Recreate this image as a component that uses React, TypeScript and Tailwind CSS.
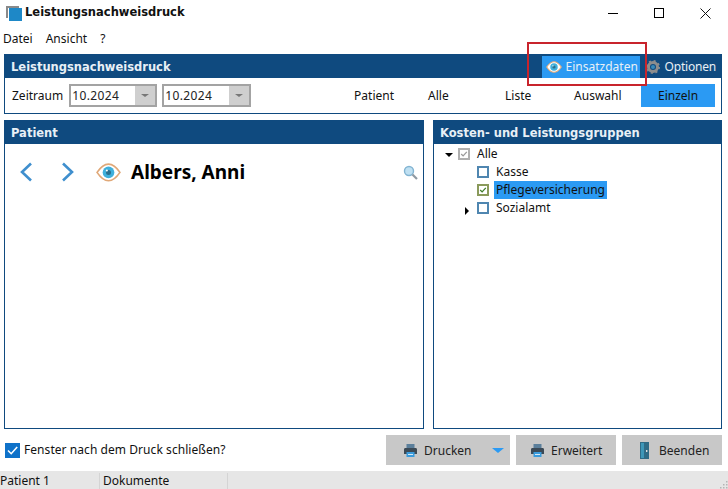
import React from "react";

const font = { fontFamily: '"Noto Sans", sans-serif' };
const boldFont = { fontFamily: '"DejaVu Sans", sans-serif' };

const Eye = ({ size = 24 }: { size?: number }) => (
  <svg width={size} height={size * 0.75} viewBox="0 0 24 18">
    <path d="M1 9C5 3 9 1 12 1s7 2 11 8c-4 6-8 8-11 8s-7-2-11-8z" fill="#fff" stroke="#e0a878" strokeWidth="1.6" />
    <circle cx="12" cy="9" r="5.6" fill="#3fb0dc" />
    <circle cx="12" cy="9" r="2.4" fill="#2a6f8e" />
    <circle cx="10.4" cy="7.2" r="1" fill="#fff" />
  </svg>
);

const Printer = () => (
  <svg width="15" height="15" viewBox="0 0 15 15">
    <rect x="3.5" y="1" width="8" height="4" fill="#5b7f9b" />
    <path d="M1 6.5C1 5.5 1.6 5 2.5 5h10c.9 0 1.5.5 1.5 1.5V11H1z" fill="#3c4a56" />
    <rect x="3.5" y="9" width="8" height="5" fill="#3a9bdc" />
    <rect x="5" y="11" width="5" height="1" fill="#d5e9f6" />
  </svg>
);

const Check = ({ color }: { color: string }) => (
  <svg width="10" height="10" viewBox="0 0 10 10">
    <path d="M1.5 5l2.4 2.4L8.5 2.4" fill="none" stroke={color} strokeWidth="1.6" />
  </svg>
);

const ComboBox = ({ value, className }: { value: string; className: string }) => (
  <div className={`flex h-[23px] items-center border-2 border-[#a3a3a3] bg-white pl-[1px] text-[12px] tracking-[0.4px] text-[#222] ${className}`}>
    <span className="flex-1">{value}</span>
    <div className="flex h-full w-[20px] items-center justify-center bg-[#cfcfcf]">
      <div className="h-0 w-0 border-x-[4px] border-t-[3px] border-x-transparent border-t-[#777]" />
    </div>
  </div>
);

const Panel = ({ title, className, children }: { title: string; className: string; children?: React.ReactNode }) => (
  <section className={`flex flex-col border border-[#0f4a7f] bg-white ${className}`}>
    <h2 className="flex h-[23px] shrink-0 items-center bg-[#0f4a7f] px-[6px] pt-[3px] text-[11.5px] font-bold text-[#e8f0f6]" style={boldFont}>
      {title}
    </h2>
    {children}
  </section>
);

const TreeRow = ({ label, checked, selected, arrow }: { label: string; checked?: boolean; selected?: boolean; arrow?: boolean }) => (
  <div className="relative flex h-[18px] items-center pl-[43px]">
    {arrow && <div className="absolute left-[31px] top-[8px] h-0 w-0 border-y-[4px] border-l-[4px] border-y-transparent border-l-black" />}
    <div className={`flex h-[12px] w-[12px] items-center justify-center border-2 ${checked ? "border-[#8a9a5b]" : "border-[#4f86b0]"}`}>
      {checked && <Check color="#3f7d2a" />}
    </div>
    <span className={`ml-[5px] px-[2px] leading-[18px] ${selected ? "bg-[#2b9af3]" : ""}`}>{label}</span>
  </div>
);

const ActionButton = ({ label, icon, className, gap = "ml-[6px]", children }: { label: string; icon: React.ReactNode; className: string; gap?: string; children?: React.ReactNode }) => (
  <button className={`flex h-[30px] items-center bg-[#c8c8c8] text-[12px] text-[#222] ${className}`}>
    {icon}
    <span className={`pt-[1px] ${gap}`}>{label}</span>
    {children}
  </button>
);

export default function App() {
  return (
    <div className="relative flex h-[489px] w-[728px] flex-col overflow-hidden bg-white text-[12px] text-[#111]" style={font}>
      <header className="flex h-[27px] shrink-0 items-center pb-[1px]">
        <div className="relative ml-[6px] h-[15px] w-[16px]">
          <div className="absolute left-0 top-0 h-[12px] w-[13px] border-l-2 border-t-2 border-[#8a8a8a]" />
          <div className="absolute bottom-0 right-0 h-[13px] w-[13px] bg-[#1e88c7]" />
        </div>
        <h1 className="ml-[3px] text-[11.5px] font-bold" style={boldFont}>Leistungsnachweisdruck</h1>
        <div className="ml-auto flex items-center gap-[36px] pr-[17px]">
          <div className="h-[1px] w-[10px] bg-black" />
          <div className="h-[10px] w-[10px] border border-black" />
          <svg width="11" height="11" viewBox="0 0 11 11"><path d="M.5.5l10 10M10.5.5l-10 10" stroke="#111" strokeWidth="1" /></svg>
        </div>
      </header>

      <nav className="flex h-[27px] shrink-0 items-start gap-[13px] pl-[3px] pt-[3px] text-[12px]">
        <span>Datei</span>
        <span>Ansicht</span>
        <span>?</span>
      </nav>

      <section className="ml-[4px] mr-[6px] h-[60px] shrink-0 border border-[#0f4a7f]">
        <div className="flex h-[23px] items-center bg-[#0f4a7f] pl-[6px] text-[#e8f0f6]">
          <h2 className="flex-1 pt-[2px] text-[11.5px] font-bold" style={boldFont}>Leistungsnachweisdruck</h2>
          <div className="flex h-[22px] w-[98px] items-center bg-[#2b9af3] pl-[4px]">
            <Eye size={16} />
            <span className="ml-[4px]">Einsatzdaten</span>
          </div>
          <svg className="ml-[6px]" width="14" height="14" viewBox="0 0 14 14">
            <circle cx="7" cy="7" r="4.5" fill="none" stroke="#8d8d8d" strokeWidth="3" />
            <circle cx="7" cy="7" r="6" fill="none" stroke="#8d8d8d" strokeWidth="2" strokeDasharray="2 2.7" />
            <circle cx="7" cy="7" r="2" fill="#3a8ab8" />
          </svg>
          <span className="ml-[5px] mr-[5px] tracking-[-0.2px]">Optionen</span>
        </div>
        <div className="flex h-[35px] items-center pl-[7px] pr-[6px]">
          <span className="mr-[6px]">Zeitraum</span>
          <ComboBox value="10.2024" className="w-[88px]" />
          <div className="w-[5px]" />
          <ComboBox value="10.2024" className="w-[89px]" />
          <span className="ml-[103px] w-[74px]">Patient</span>
          <span className="w-[77px]">Alle</span>
          <span className="w-[69px]">Liste</span>
          <span className="w-[67px]">Auswahl</span>
          <div className="flex h-[23px] w-[74px] items-center justify-center bg-[#2b9af3]">Einzeln</div>
        </div>
      </section>

      <main className="ml-[4px] mr-[6px] mt-[6px] flex h-[309px] shrink-0 gap-[9px]">
        <Panel title="Patient" className="w-[420px]">
          <div className="flex items-center pl-[14px] pr-[5px] pt-[14px]">
            <svg width="14" height="20" viewBox="0 0 14 20"><path d="M12 1.5L3 10l9 8.5" fill="none" stroke="#3f8fce" strokeWidth="2.6" /></svg>
            <svg className="ml-[28px]" width="14" height="20" viewBox="0 0 14 20"><path d="M2 1.5L11 10l-9 8.5" fill="none" stroke="#3f8fce" strokeWidth="2.6" /></svg>
            <div className="ml-[21px]"><Eye size={25} /></div>
            <span className="ml-[10px] text-[19px] font-bold text-black" style={font}>Albers, Anni</span>
            <svg className="ml-auto" width="15" height="15" viewBox="0 0 15 15">
              <circle cx="6" cy="6" r="4.5" fill="#bfe0f2" stroke="#82b4d2" strokeWidth="1.4" />
              <path d="M9.5 9.5L14 14" stroke="#8f9aa3" strokeWidth="2.2" />
            </svg>
          </div>
        </Panel>
        <Panel title="Kosten- und Leistungsgruppen" className="flex-1">
          <div className="pt-[1px]">
            <div className="relative flex h-[18px] items-center pl-[24px]">
              <div className="absolute left-[11px] top-[8px] h-0 w-0 border-x-[4px] border-t-[4px] border-x-transparent border-t-black" />
              <div className="flex h-[12px] w-[12px] items-center justify-center border-2 border-[#b0b0b0]">
                <Check color="#9a9a9a" />
              </div>
              <span className="ml-[7px]">Alle</span>
            </div>
            <TreeRow label="Kasse" />
            <TreeRow label="Pflegeversicherung" checked selected />
            <TreeRow label="Sozialamt" arrow />
          </div>
        </Panel>
      </main>

      <footer className="ml-[4px] mr-[6px] mt-[6px] flex h-[30px] shrink-0 items-center">
        <div className="ml-[1px] flex h-[15px] w-[15px] items-center justify-center bg-[#0f72c9]">
          <svg width="13" height="13" viewBox="0 0 13 13"><path d="M2 6.5l3.2 3.2L11.2 3" fill="none" stroke="#fff" strokeWidth="1.6" /></svg>
        </div>
        <span className="ml-[4px] tracking-[0.06px]">Fenster nach dem Druck schließen?</span>
        <ActionButton label="Drucken" icon={<Printer />} className="ml-auto w-[124px] pl-[17px]">
          <div className="ml-auto mr-[6px] h-0 w-0 border-x-[6px] border-t-[5px] border-x-transparent border-t-[#2b9af3]" />
        </ActionButton>
        <ActionButton label="Erweitert" icon={<Printer />} className="ml-[6px] w-[100px] pl-[14px]" />
        <ActionButton
          label="Beenden"
          gap="ml-[10px]"
          icon={
            <svg width="9" height="17" viewBox="0 0 9 17">
              <rect width="9" height="17" fill="#2f6b86" />
              <rect x="1" y="1" width="3" height="15" fill="#3e97b8" />
              <rect x="6" y="8" width="1.4" height="2" fill="#e0e0e0" />
            </svg>
          }
          className="ml-[6px] w-[100px] pl-[18px]"
        />
      </footer>

      <div className="mt-[6px] flex h-[18px] shrink-0 items-end bg-[#e6e6e6] text-[12px] leading-[16px]">
        <span className="h-[16px] w-[100px] border-r border-[#d4d4d4]">Patient 1</span>
        <span className="h-[16px] w-[128px] border-r border-[#d4d4d4] pl-[3px]">Dokumente</span>
        <svg className="ml-auto" width="9" height="9" viewBox="0 0 9 9" fill="#b5b5b5">
          <rect x="7" y="1" width="1.5" height="1.5" />
          <rect x="4" y="4" width="1.5" height="1.5" />
          <rect x="7" y="4" width="1.5" height="1.5" />
          <rect x="1" y="7" width="1.5" height="1.5" />
          <rect x="4" y="7" width="1.5" height="1.5" />
          <rect x="7" y="7" width="1.5" height="1.5" />
        </svg>
      </div>

      {/* Red marker drawn over the screenshot */}
      <div className="absolute left-[527px] top-[42px] h-[44px] w-[120px] border-2 border-[#c8242c]" />
    </div>
  );
}
